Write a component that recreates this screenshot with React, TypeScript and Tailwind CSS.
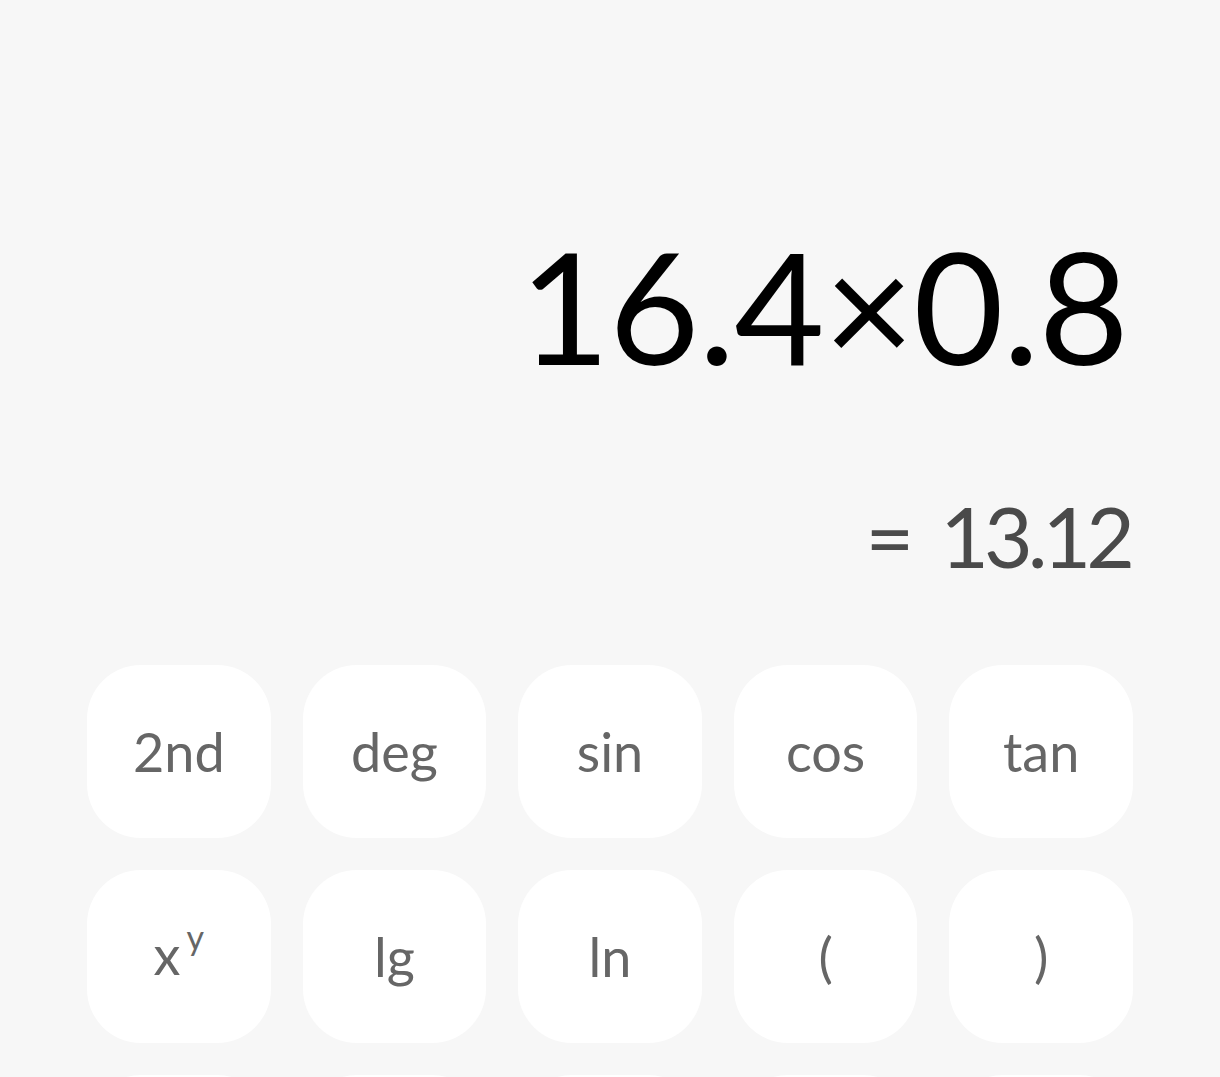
import React from 'react';

const keys: { label: React.ReactNode; id: string }[] = [
    { id: '2nd', label: '2nd' },
    { id: 'deg', label: 'deg' },
    { id: 'sin', label: 'sin' },
    { id: 'cos', label: 'cos' },
    { id: 'tan', label: 'tan' },
    {
        id: 'pow',
        label: (
            <span className="flex items-start -mt-[4px]">
                x<span className="text-[34px] leading-none mt-[6px] ml-[6px]">y</span>
            </span>
        ),
    },
    { id: 'lg', label: 'lg' },
    { id: 'ln', label: 'ln' },
    { id: 'lp', label: '(' },
    { id: 'rp', label: ')' },
    { id: 'r3a', label: '' },
    { id: 'r3b', label: '' },
    { id: 'r3c', label: '' },
    { id: 'r3d', label: '' },
    { id: 'r3e', label: '' },
];

export default function App() {
    return (
        <div
            className="h-[1077px] w-full overflow-hidden bg-[#f7f7f7] flex flex-col"
            style={{ fontFamily: 'Lato, "Noto Sans", sans-serif' }}
        >
            {/* Display */}
            <div className="flex flex-col items-end pr-[92px] pt-[220px]">
                <div className="text-[156px] leading-[170px] text-black tracking-[-1px]">16.4×0.8</div>
                <div className="mt-[96px] flex items-baseline gap-[26px] text-[84px] leading-[100px] text-[#4a4a4a] -mr-[2px]">
                    <span>=</span>
                    <span className="tracking-[-5px]">13.12</span>
                </div>
            </div>

            {/* Keypad */}
            <div className="mt-[79px] px-[87px] grid grid-cols-5 gap-x-[32px] gap-y-[32px]">
                {keys.map((k) => (
                    <button
                        key={k.id}
                        className="h-[173px] rounded-[54px] bg-white flex items-center justify-center text-[54px] text-[#666666]"
                    >
                        {k.label}
                    </button>
                ))}
            </div>
        </div>
    );
}
